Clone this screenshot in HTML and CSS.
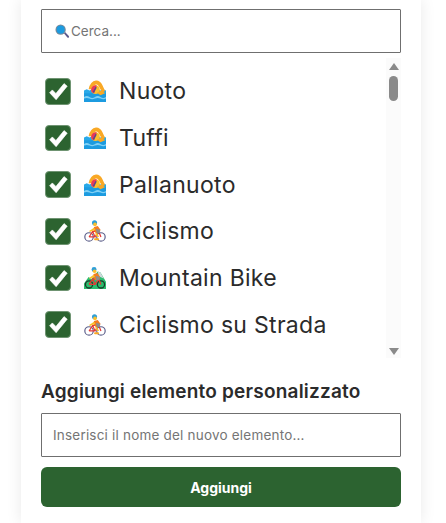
FILE: index.html
```html
<!DOCTYPE html>
<html lang="it">
<head>
<meta charset="utf-8">
<title>Sport</title>
<link rel="stylesheet" href="styles.css">
</head>
<body>
<svg class="defs" width="0" height="0" aria-hidden="true">
  <symbol id="swim" viewBox="0 0 24 24">
    <rect x="0" y="13" width="24" height="11" fill="#1c9be0"/>
    <path d="M0 11.500l3-1.500 3 1.500 3-1.500 3 1.500 3-1.500 3 1.500 3-1.500 3 1.500v3H0z" fill="#29a9e8"/>
    <path d="M0 18.500q3-2 6 0t6 0 6 0 6 0v1.800q-3 1.500-6 0t-6 0-6 0-6 0z" fill="#7fd0f5"/>
    <path d="M5 10Q7 1 13 .5q4.500-.3 7 5l3 6.500-3 1.500-3.500-6q-1.500-3-3.500-2.500-2.500.5-4 5z" fill="#f9a825"/>
    <circle cx="12.500" cy="10.500" r="4.800" fill="#fbc02d"/>
    <path d="M7.800 11a4.800 4.800 0 0 1 6.200-5l-3 8.500q-3.200-.5-3.200-3.500z" fill="#e8385a"/>
    <path d="M9.500 13l3-5.500 1.500.8-3 5.500z" fill="#5d4a8a"/>
    <path d="M14 14l5-2.500 4 3-5 2z" fill="#f9a825"/>
  </symbol>
  <symbol id="bike" viewBox="0 0 24 24">
    <g fill="none" stroke-width="1.300">
      <circle cx="5.500" cy="18.500" r="4.600" stroke="#5c5f8a"/>
      <circle cx="18.500" cy="18.500" r="4.600" stroke="#5c5f8a"/>
      <path d="M5.500 18.500l4-6h6.500l2.500 6M9.500 12.500l2.500 6h-6.500M12 18.500l4-6" stroke="#e53935"/>
    </g>
    <circle cx="11.500" cy="3" r="2.800" fill="#2e9fd8"/>
    <circle cx="12" cy="4.800" r="2" fill="#fbc02d"/>
    <path d="M11 7.500l4-1 3 4-1 3-4 1-3-4z" fill="#f57c20"/>
    <path d="M13 9.500l4.500 1v3.500l-3.500 1z" fill="#8d8d8d"/>
    <path d="M11 8.500l-5.500 3.500 1 1 6-2.500z" fill="#fbc02d"/>
    <path d="M14 14l2.500 4.500h-2l-2.500-3.500z" fill="#fbc02d"/>
    <rect x="11" y="20" width="5.500" height="2" rx="1" fill="#f9a825"/>
  </symbol>
  <symbol id="mtb" viewBox="0 0 24 24">
    <path d="M0 24v-6l5-7 3 2 7-8 3 1 6 10v8z" fill="#2bbd6e"/>
    <path d="M15 5l3 1 3.500 6.500-5.500-2.500z" fill="#cfd8dc"/>
    <g fill="none" stroke-width="1.400">
      <circle cx="5.500" cy="19" r="3.900" stroke="#1b3a2a"/>
      <circle cx="18.500" cy="19" r="3.900" stroke="#1b3a2a"/>
      <path d="M5.500 19l4-6h6.500l2.500 6M9.500 13l2.500 6h-6.500M12 19l4-6" stroke="#e53935"/>
    </g>
    <circle cx="11" cy="2.800" r="2.700" fill="#2e9fd8"/>
    <circle cx="11.500" cy="4.600" r="2" fill="#fbc02d"/>
    <path d="M10.500 7.500l4-1 3 4-1 3-4 1-3-4z" fill="#f57c20"/>
    <path d="M12.500 9.500l4.500 1v3.500l-3.500 1z" fill="#8d8d8d"/>
    <path d="M10.500 8.500l-5 3.500 1 1 5.500-2.500z" fill="#fbc02d"/>
  </symbol>
  <symbol id="check" viewBox="0 0 26 26">
    <path d="M4.500 14.400l2.700-2.700 3.500 3.500 8-9.700 3.100 2.500-10.900 13.300z" fill="#fff" stroke="#fff" stroke-width=".6" stroke-linejoin="round"/>
  </symbol>
</svg>
<main class="card">
  <div class="search">
    <svg class="lens" viewBox="0 0 16 16" aria-hidden="true">
      <path d="M9.500 9.800l1.200-1.200 4 4.200q.6.800 0 1.500t-1.500 0z" fill="#5d5a8c"/>
      <circle cx="6" cy="6" r="5.500" fill="#7a8a99"/>
      <circle cx="6" cy="6" r="4.300" fill="#1c9be0"/>
    </svg>
    <span class="placeholder">Cerca...</span>
  </div>
  <div class="list-wrap">
    <ul class="list">
      <li class="row"><span class="box"><svg><use href="#check"/></svg></span><svg class="emoji"><use href="#swim"/></svg><span class="label">Nuoto</span></li>
      <li class="row"><span class="box"><svg><use href="#check"/></svg></span><svg class="emoji"><use href="#swim"/></svg><span class="label">Tuffi</span></li>
      <li class="row"><span class="box"><svg><use href="#check"/></svg></span><svg class="emoji"><use href="#swim"/></svg><span class="label">Pallanuoto</span></li>
      <li class="row"><span class="box"><svg><use href="#check"/></svg></span><svg class="emoji"><use href="#bike"/></svg><span class="label">Ciclismo</span></li>
      <li class="row"><span class="box"><svg><use href="#check"/></svg></span><svg class="emoji"><use href="#mtb"/></svg><span class="label">Mountain Bike</span></li>
      <li class="row"><span class="box"><svg><use href="#check"/></svg></span><svg class="emoji"><use href="#bike"/></svg><span class="label">Ciclismo su Strada</span></li>
    </ul>
    <div class="scrollbar">
      <span class="arrow-up"></span>
      <span class="thumb"></span>
      <span class="arrow-down"></span>
    </div>
  </div>
  <h2 class="heading">Aggiungi elemento personalizzato</h2>
  <div class="field"><span class="placeholder small">Inserisci il nome del nuovo elemento...</span></div>
  <button class="add" type="button">Aggiungi</button>
</main>
</body>
</html>
```
FILE: styles.css
```css
* { box-sizing: border-box; }
html, body { margin: 0; padding: 0; background: #fff; }
body {
  width: 446px;
  height: 523px;
  overflow: hidden;
  font-family: "Inter", "Liberation Sans", sans-serif;
  color: #212529;
}
.defs { position: absolute; }
.card {
  width: 400px;
  height: 523px;
  margin-left: 21px;
  padding: 9px 20px 0;
  background: #fff;
  box-shadow: 0 0 15px rgba(0,0,0,.09);
  display: flex;
  flex-direction: column;
}
.search, .field {
  height: 44px;
  flex: none;
  border: 1px solid #6f6f6f;
  border-radius: 1px;
  display: flex;
  align-items: center;
}
.search { padding-left: 13px; gap: 1px; }
.field { padding-left: 11px; margin-top: 11px; }
.lens { width: 15px; height: 15px; }
.placeholder { font-size: 13.500px; color: #757575; }
.placeholder.small { font-size: 13.500px; letter-spacing: .2px; }
.list-wrap {
  flex: none;
  height: 300px;
  margin-top: 5px;
  display: flex;
}
.list {
  flex: 1;
  margin: 0;
  padding: 10px 0 0 3.500px;
  list-style: none;
}
.row {
  height: 46.670px;
  display: flex;
  align-items: center;
}
.box {
  width: 26.500px;
  height: 26.500px;
  background: #2c6330;
  border: 1px solid #6f9472;
  border-radius: 4px;
  display: block;
  position: relative;
  flex: none;
}
.box svg { position: absolute; left: -1px; top: -1px; width: 26.500px; height: 26.500px; }
.emoji { width: 22px; height: 22px; margin-left: 13px; flex: none; }
.label { margin-left: 13px; font-size: 23px; letter-spacing: .3px; color: #2b2b2b; white-space: nowrap; }
.scrollbar {
  width: 15px;
  flex: none;
  background: #fbfbfb;
  display: flex;
  flex-direction: column;
  align-items: center;
  padding-top: 5px;
  position: relative;
}
.arrow-up, .arrow-down {
  width: 0;
  height: 0;
  border-left: 5px solid transparent;
  border-right: 5px solid transparent;
}
.arrow-up { border-bottom: 7px solid #8a8a8a; }
.arrow-down { border-top: 7px solid #8a8a8a; position: absolute; bottom: 3px; }
.thumb {
  width: 9px;
  height: 25px;
  margin-top: 6px;
  background: #8a8a8a;
  border-radius: 5px;
}
.heading {
  margin: 24px 0 0;
  font-size: 19px;
  font-weight: 600;
  line-height: 20px;
  letter-spacing: .2px;
  color: #2b2b2b;
}
.add {
  height: 40px;
  flex: none;
  margin-top: 10px;
  border: 0;
  border-radius: 6px;
  background: #2c6330;
  color: #fff;
  font: 700 14px "Inter", "Liberation Sans", sans-serif;
}
```
